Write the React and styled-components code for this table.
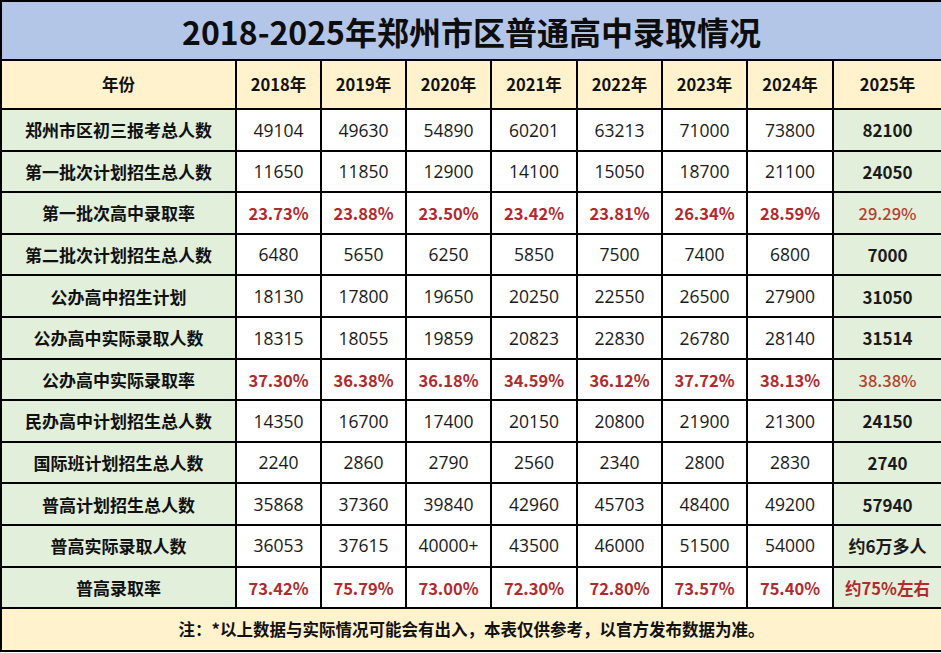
import React from 'react';
import styled, { createGlobalStyle } from 'styled-components';

const GlobalStyle = createGlobalStyle`
  html, body {
    margin: 0;
    padding: 0;
    background: #ffffff;
  }
  body {
    font-family: "Noto Sans CJK SC", "Noto Sans", sans-serif;
    color: #111;
  }
`;

const Table = styled.table`
  width: 941px;
  table-layout: fixed;
  border-collapse: collapse;
  border: 2px solid #000;
`;

const Cell = styled.td`
  border: 2px solid #000;
  padding: 0;
  height: 39.6px;
  text-align: center;
  vertical-align: middle;
  font-size: 17px;
  line-height: 1;
  white-space: nowrap;
  background: ${(p) => (p.$green ? '#e2efda' : '#ffffff')};
  color: #1a1a1a;
`;

const TitleCell = styled.th`
  border: 2px solid #000;
  height: 57px;
  padding: 0;
  background: #b4c6e7;
  font-size: 32px;
  font-weight: 700;
  color: #0d0d0d;
  text-align: center;
  line-height: 1;
`;

const HeadCell = styled.th`
  border: 2px solid #000;
  height: 47px;
  padding: 0;
  background: #fff2cc;
  font-size: 16.5px;
  font-weight: 700;
  color: #111;
  text-align: center;
  line-height: 1;
`;

const Label = styled.span`
  font-weight: 700;
  font-size: 17px;
  color: #111;
`;

const Num = styled.span`
  font-family: ${(p) => (p.$bold ? '"Noto Sans CJK SC", sans-serif' : '"Open Sans", "Noto Sans CJK SC", sans-serif')};
  font-size: ${(p) => (p.$bold ? '17px' : '17.5px')};
  font-weight: ${(p) => (p.$bold ? 700 : 400)};
  color: #1a1a1a;
`;

const Rate = styled.span`
  font-size: 16.5px;
  font-weight: ${(p) => (p.$soft ? 500 : 700)};
  color: ${(p) => (p.$soft ? '#b4402f' : '#b22a2e')};
`;

const FootCell = styled.td`
  border: 2px solid #000;
  height: 41px;
  padding: 0;
  background: #fff2cc;
  text-align: center;
  font-size: 16.5px;
  font-weight: 700;
  color: #111;
  line-height: 1;
`;

const years = ['2018年', '2019年', '2020年', '2021年', '2022年', '2023年', '2024年', '2025年'];

const rows = [
  { label: '郑州市区初三报考总人数', values: ['49104', '49630', '54890', '60201', '63213', '71000', '73800', '82100'] },
  { label: '第一批次计划招生总人数', values: ['11650', '11850', '12900', '14100', '15050', '18700', '21100', '24050'] },
  { label: '第一批次高中录取率', rate: true, values: ['23.73%', '23.88%', '23.50%', '23.42%', '23.81%', '26.34%', '28.59%', '29.29%'] },
  { label: '第二批次计划招生总人数', values: ['6480', '5650', '6250', '5850', '7500', '7400', '6800', '7000'] },
  { label: '公办高中招生计划', values: ['18130', '17800', '19650', '20250', '22550', '26500', '27900', '31050'] },
  { label: '公办高中实际录取人数', values: ['18315', '18055', '19859', '20823', '22830', '26780', '28140', '31514'] },
  { label: '公办高中实际录取率', rate: true, values: ['37.30%', '36.38%', '36.18%', '34.59%', '36.12%', '37.72%', '38.13%', '38.38%'] },
  { label: '民办高中计划招生总人数', values: ['14350', '16700', '17400', '20150', '20800', '21900', '21300', '24150'] },
  { label: '国际班计划招生总人数', values: ['2240', '2860', '2790', '2560', '2340', '2800', '2830', '2740'] },
  { label: '普高计划招生总人数', values: ['35868', '37360', '39840', '42960', '45703', '48400', '49200', '57940'] },
  { label: '普高实际录取人数', values: ['36053', '37615', '40000+', '43500', '46000', '51500', '54000', '约6万多人'] },
  { label: '普高录取率', rate: true, lastBold: true, values: ['73.42%', '75.79%', '73.00%', '72.30%', '72.80%', '73.57%', '75.40%', '约75%左右'] },
];

const widths = [235, 85, 85, 85, 86, 85, 85, 86, 109];

function ValueCell({ row, value, last }) {
  if (row.rate) {
    return (
      <Cell $green={last}>
        <Rate $soft={last && !row.lastBold}>{value}</Rate>
      </Cell>
    );
  }
  return (
    <Cell $green={last}>
      <Num $bold={last}>{value}</Num>
    </Cell>
  );
}

export default function App() {
  return (
    <>
      <GlobalStyle />
      <Table>
        <colgroup>
          {widths.map((w, i) => (
            <col key={i} style={{ width: w }} />
          ))}
        </colgroup>
        <thead>
          <tr>
            <TitleCell colSpan={9}>2018-2025年郑州市区普通高中录取情况</TitleCell>
          </tr>
          <tr>
            <HeadCell>年份</HeadCell>
            {years.map((y) => (
              <HeadCell key={y}>{y}</HeadCell>
            ))}
          </tr>
        </thead>
        <tbody>
          {rows.map((row) => (
            <tr key={row.label}>
              <Cell $green>
                <Label>{row.label}</Label>
              </Cell>
              {row.values.map((v, i) => (
                <ValueCell key={i} row={row} value={v} last={i === row.values.length - 1} />
              ))}
            </tr>
          ))}
          <tr>
            <FootCell colSpan={9}>注：*以上数据与实际情况可能会有出入，本表仅供参考，以官方发布数据为准。</FootCell>
          </tr>
        </tbody>
      </Table>
    </>
  );
}
